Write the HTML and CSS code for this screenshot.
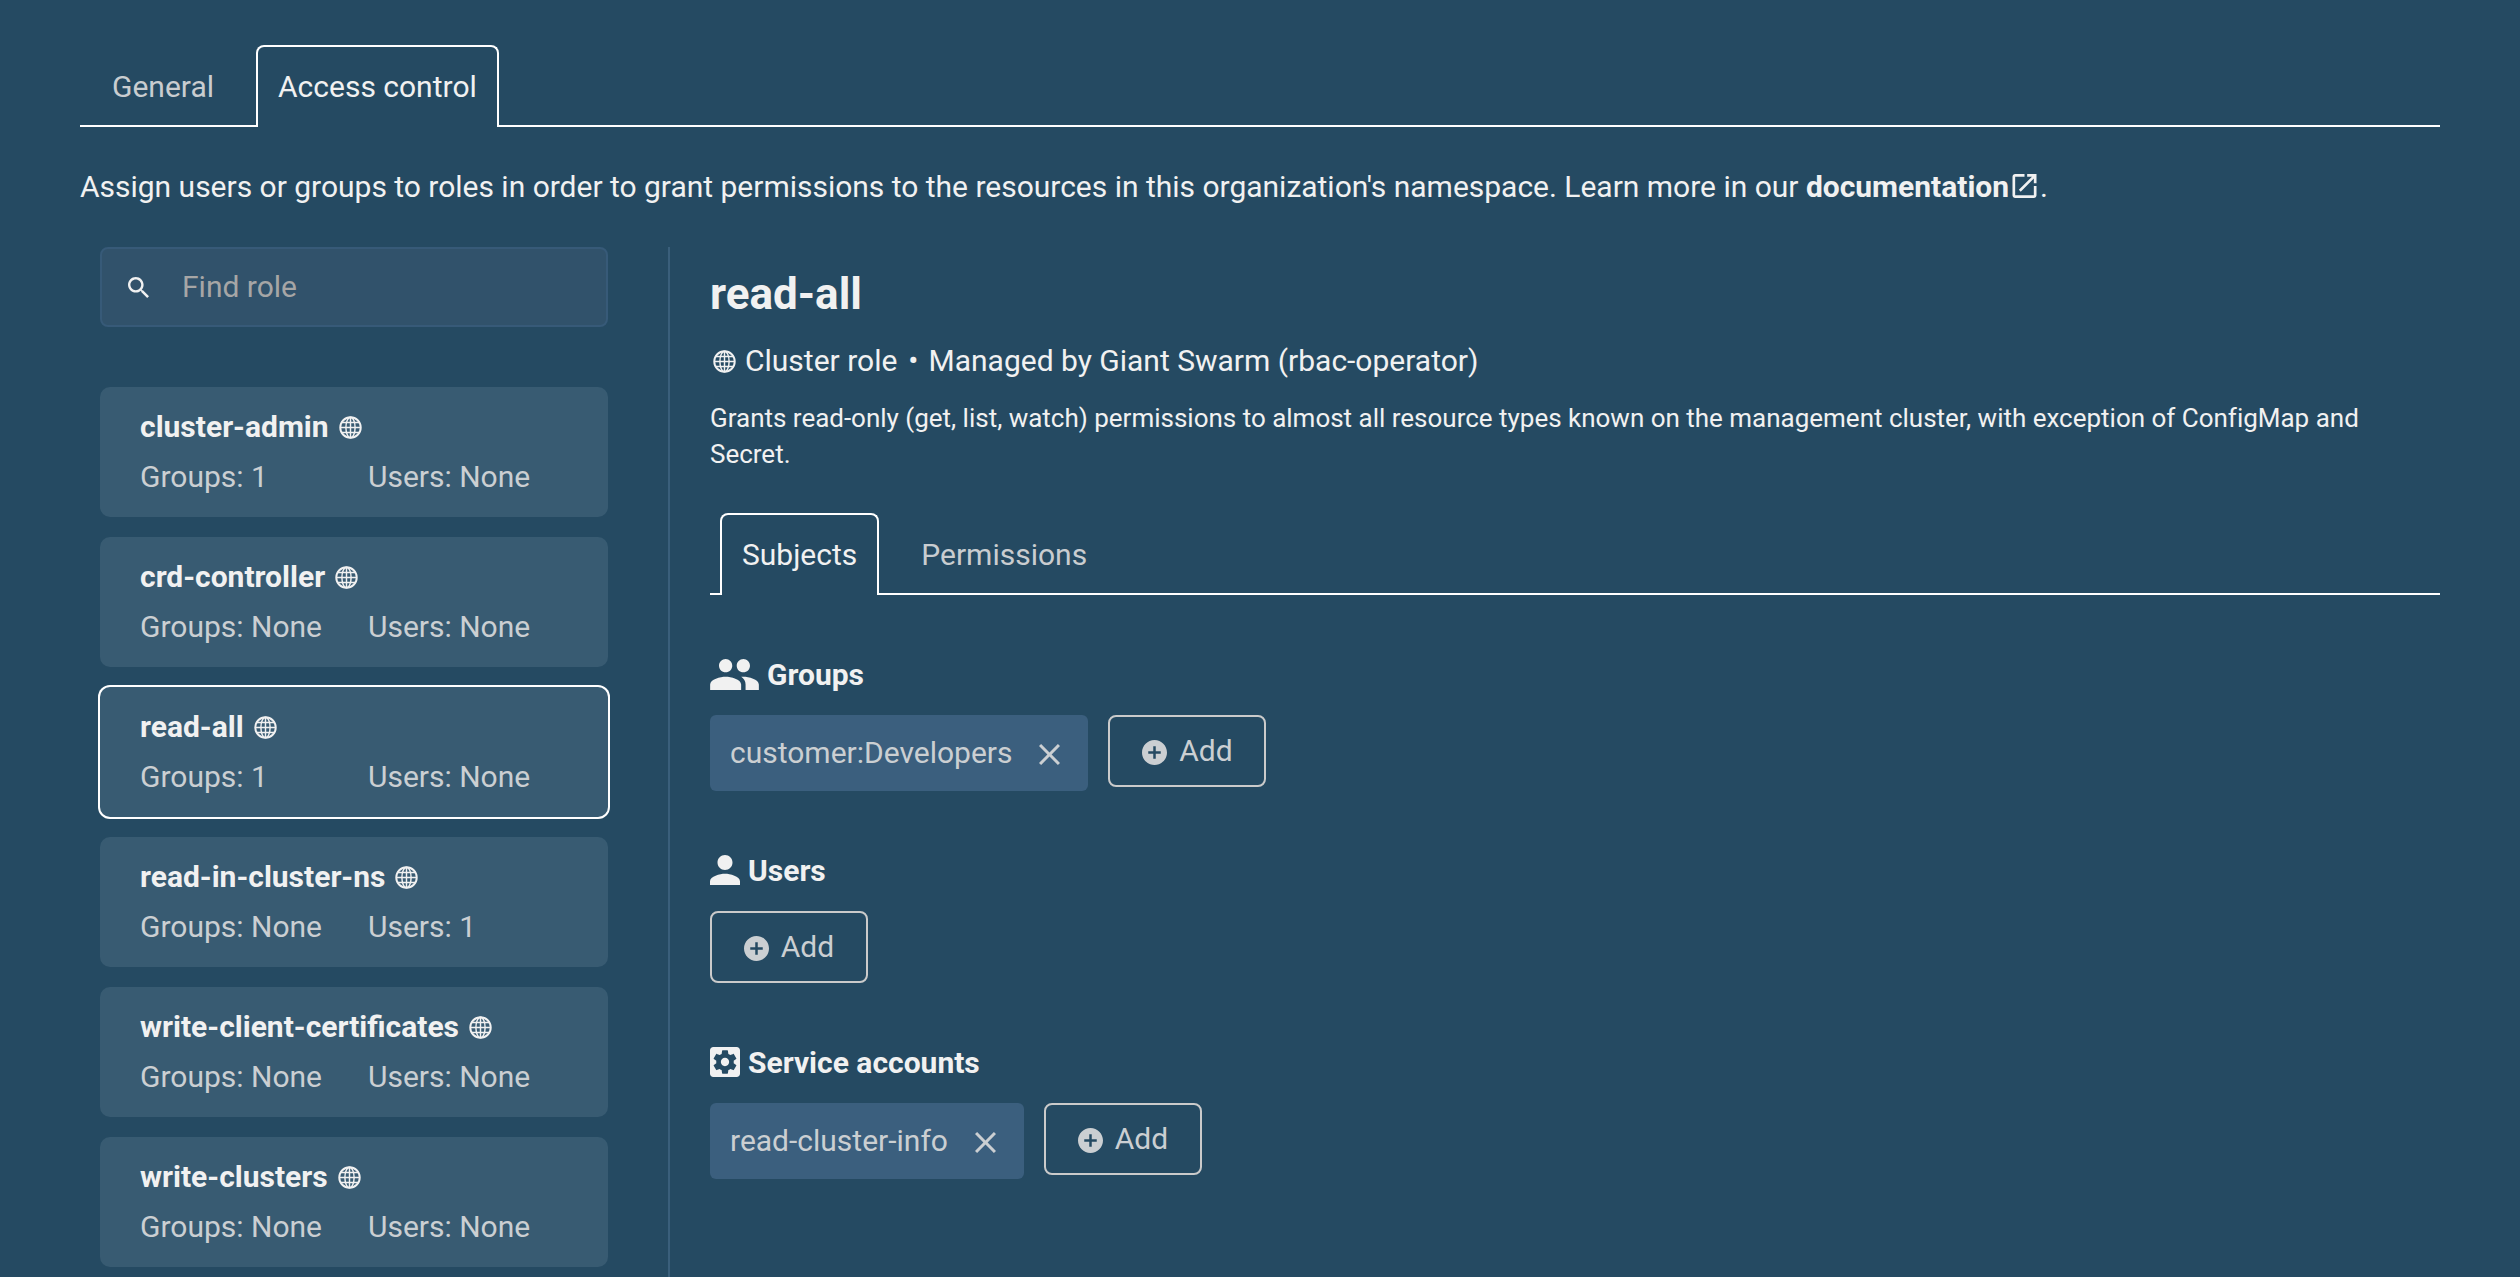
FILE: index.html
```html
<!DOCTYPE html>
<html lang="en">
<head>
<meta charset="utf-8">
<title>Access control</title>
<link rel="stylesheet" href="styles.css">
</head>
<body>
<svg class="defs" aria-hidden="true">
  <symbol id="globe" viewBox="0 0 24 24"><g fill="none" stroke="currentColor"><circle cx="12" cy="12" r="10.7" stroke-width="2"/><g stroke-width="1.5"><ellipse cx="12" cy="12" rx="4.8" ry="10.6"/><path d="M12 1.4v21.2M1.4 12h21.2M3 6.8h18M3 17.2h18"/></g></g></symbol>
  <symbol id="search" viewBox="3 3 17.5 17.5"><path fill="currentColor" d="M15.5 14h-.79l-.28-.27C15.41 12.59 16 11.11 16 9.5 16 5.91 13.09 3 9.5 3S3 5.91 3 9.5 5.91 16 9.5 16c1.61 0 3.09-.59 4.23-1.57l.27.28v.79l5 4.99L20.49 19l-4.99-5zm-6 0C7.01 14 5 11.99 5 9.5S7.01 5 9.5 5 14 7.01 14 9.5 11.99 14 9.5 14z"/></symbol>
  <symbol id="external" viewBox="3 3 18 18"><path fill="currentColor" d="M19 19H5V5h7V3H5c-1.11 0-2 .9-2 2v14c0 1.1.89 2 2 2h14c1.1 0 2-.9 2-2v-7h-2v7zM14 3v2h3.59l-9.83 9.83 1.41 1.41L19 6.41V10h2V3h-7z"/></symbol>
  <symbol id="group" viewBox="1 5 22 14"><path fill="currentColor" d="M16 11c1.66 0 2.99-1.34 2.99-3S17.66 5 16 5c-1.66 0-3 1.34-3 3s1.34 3 3 3zm-8 0c1.66 0 2.99-1.34 2.99-3S9.66 5 8 5C6.34 5 5 6.34 5 8s1.34 3 3 3zm0 2c-2.33 0-7 1.17-7 3.5V19h14v-2.5c0-2.33-4.67-3.5-7-3.5zm8 0c-.29 0-.62.02-.97.05 1.16.84 1.97 1.97 1.97 3.45V19h6v-2.5c0-2.33-4.67-3.5-7-3.5z"/></symbol>
  <symbol id="person" viewBox="4 4 16 16"><path fill="currentColor" d="M12 12c2.21 0 4-1.79 4-4s-1.79-4-4-4-4 1.79-4 4 1.79 4 4 4zm0 2c-2.67 0-8 1.34-8 4v2h16v-2c0-2.66-5.33-4-8-4z"/></symbol>
  <symbol id="service" viewBox="3 3 18 18"><path fill="currentColor" fill-rule="evenodd" d="M19 3H5c-1.11 0-2 .9-2 2v14c0 1.1.89 2 2 2h14c1.11 0 2-.9 2-2V5c0-1.1-.89-2-2-2zm-1.75 9c0 .23-.02.46-.05.68l1.48 1.16c.13.11.17.3.08.45l-1.4 2.42c-.09.15-.27.21-.43.15l-1.74-.7c-.36.28-.76.51-1.18.69l-.26 1.85c-.03.17-.18.3-.35.3h-2.8c-.17 0-.32-.13-.35-.29l-.26-1.85c-.43-.18-.82-.41-1.18-.69l-1.74.7c-.16.06-.34 0-.43-.15l-1.4-2.42c-.09-.15-.05-.34.08-.45l1.48-1.16c-.03-.23-.05-.46-.05-.69 0-.23.02-.46.05-.68l-1.48-1.16c-.13-.11-.17-.3-.08-.45l1.4-2.42c.09-.15.27-.21.43-.15l1.74.7c.36-.28.76-.51 1.18-.69l.26-1.85c.03-.17.18-.3.35-.3h2.8c.17 0 .32.13.35.29l.26 1.85c.43.18.82.41 1.18.69l1.74-.7c.16-.06.34 0 .43.15l1.4 2.42c.09.15.05.34-.08.45l-1.48 1.16c.03.23.05.46.05.69zM12 9.5c-1.38 0-2.5 1.12-2.5 2.5s1.12 2.5 2.5 2.5 2.5-1.12 2.5-2.5-1.12-2.5-2.5-2.5z"/></symbol>
  <symbol id="close" viewBox="5 5 14 14"><path fill="currentColor" d="M19 6.41L17.59 5 12 10.59 6.41 5 5 6.41 10.59 12 5 17.59 6.41 19 12 13.41 17.59 19 19 17.59 13.41 12z"/></symbol>
  <symbol id="add" viewBox="2 2 20 20"><path fill="currentColor" fill-rule="evenodd" d="M12 2C6.48 2 2 6.48 2 12s4.48 10 10 10 10-4.48 10-10S17.52 2 12 2zm5 11h-4v4h-2v-4H7v-2h4V7h2v4h4v2z"/></symbol>
</svg>

<main class="page">
  <nav class="tabs">
    <a class="tab tab-first">General</a>
    <a class="tab tab-active">Access control</a>
  </nav>

  <p class="intro">Assign users or groups to roles in order to grant permissions to the resources in this organization's namespace. Learn more in our <strong>documentation</strong><svg class="icon-external"><use href="#external"/></svg>.</p>

  <div class="columns">
    <aside class="sidebar">
      <div class="search">
        <svg class="icon-search"><use href="#search"/></svg>
        <span class="placeholder">Find role</span>
      </div>
      <ul class="roles">
        <li class="role">
          <div class="role-name">cluster-admin <svg class="icon-globe"><use href="#globe"/></svg></div>
          <div class="role-counts"><span>Groups: 1</span><span>Users: None</span></div>
        </li>
        <li class="role">
          <div class="role-name">crd-controller <svg class="icon-globe"><use href="#globe"/></svg></div>
          <div class="role-counts"><span>Groups: None</span><span>Users: None</span></div>
        </li>
        <li class="role role-selected">
          <div class="role-name">read-all <svg class="icon-globe"><use href="#globe"/></svg></div>
          <div class="role-counts"><span>Groups: 1</span><span>Users: None</span></div>
        </li>
        <li class="role">
          <div class="role-name">read-in-cluster-ns <svg class="icon-globe"><use href="#globe"/></svg></div>
          <div class="role-counts"><span>Groups: None</span><span>Users: 1</span></div>
        </li>
        <li class="role">
          <div class="role-name">write-client-certificates <svg class="icon-globe"><use href="#globe"/></svg></div>
          <div class="role-counts"><span>Groups: None</span><span>Users: None</span></div>
        </li>
        <li class="role">
          <div class="role-name">write-clusters <svg class="icon-globe"><use href="#globe"/></svg></div>
          <div class="role-counts"><span>Groups: None</span><span>Users: None</span></div>
        </li>
      </ul>
    </aside>

    <section class="detail">
      <h1 class="detail-title">read-all</h1>
      <div class="detail-meta"><svg class="icon-globe"><use href="#globe"/></svg><span>Cluster role</span><span class="dot">•</span><span>Managed by Giant Swarm (rbac-operator)</span></div>
      <p class="detail-desc">Grants read-only (get, list, watch) permissions to almost all resource types known on the management cluster, with exception of ConfigMap and Secret.</p>

      <nav class="tabs subtabs">
        <a class="tab tab-first tab-active">Subjects</a>
        <a class="tab">Permissions</a>
      </nav>

      <div class="subject">
        <h2 class="subject-title"><svg class="icon-group"><use href="#group"/></svg>Groups</h2>
        <div class="subject-row">
          <span class="chip">customer:Developers<svg class="icon-close"><use href="#close"/></svg></span>
          <button class="add"><svg class="icon-add"><use href="#add"/></svg>Add</button>
        </div>
      </div>

      <div class="subject">
        <h2 class="subject-title"><svg class="icon-person"><use href="#person"/></svg>Users</h2>
        <div class="subject-row">
          <button class="add"><svg class="icon-add"><use href="#add"/></svg>Add</button>
        </div>
      </div>

      <div class="subject">
        <h2 class="subject-title"><svg class="icon-person"><use href="#service"/></svg>Service accounts</h2>
        <div class="subject-row">
          <span class="chip">read-cluster-info<svg class="icon-close"><use href="#close"/></svg></span>
          <button class="add"><svg class="icon-add"><use href="#add"/></svg>Add</button>
        </div>
      </div>
    </section>
  </div>
</main>
</body>
</html>
```

FILE: styles.css
```css
* { box-sizing: border-box; }
html, body { margin: 0; height: 100%; overflow: hidden; }
body {
  background: #254a62;
  color: #f1f1f1;
  font-family: Roboto, "Liberation Sans", sans-serif;
  font-size: 30px;
}
.defs { display: none; }
.page { padding: 45px 80px 0; height: 1277px; overflow: hidden; }

/* Tabs */
.tabs { display: flex; gap: 20px; height: 82px; border-bottom: 2px solid #fff; }
.tab {
  display: flex; align-items: center; height: 82px;
  padding: 0 20px 1px; border: 2px solid transparent; border-bottom: 0;
  border-radius: 8px 8px 0 0; color: #c9cdd0;
}
.tab-first { margin-left: 10px; }
.tab-active { border-color: #fff; color: #f1f1f1; background: #254a62; }

.intro { margin: 0; padding: 40px 0 0; height: 120px; line-height: 40px; letter-spacing: -0.012px; }
.intro strong { font-weight: 700; }
.icon-external { display: inline-block; width: 25px; height: 24px; margin: 0 3px; vertical-align: -1px; }

/* Columns */
.columns { display: flex; }
.sidebar { width: 590px; padding: 0 60px 0 20px; flex: none; border-right: 2px solid #3a5f7b; min-height: 1100px; }
.detail { flex: 1; padding: 19px 0 0 40px; min-width: 0; }

/* Search */
.search {
  display: flex; align-items: center; height: 80px;
  background: #31526b; border: 2px solid #375a78; border-radius: 8px;
  padding: 0 0 2px 26px; margin-bottom: 60px;
}
.icon-search { width: 21px; height: 21px; color: #f1f1f1; margin: 2px 33px 0 0; }
.placeholder { color: #a6a6a6; }

/* Role list */
.roles { list-style: none; margin: 0; padding: 0; }
.role { height: 130px; margin-bottom: 20px; padding: 15px 0 15px 40px; background: #385b72; border-radius: 10px; line-height: 50px; }
.role-selected { box-shadow: 0 0 0 2px #fff; }
.role-name { display: flex; align-items: center; gap: 10px; font-size: 30px; font-weight: 700; white-space: nowrap; }
.role-counts { display: grid; grid-template-columns: 228px auto; color: #cbcfd2; }
.icon-globe { width: 23px; height: 23px; flex: none; }

/* Detail */
.detail-title { margin: 0; font-size: 44px; font-weight: 700; line-height: 56px; }
.detail-meta { display: flex; align-items: center; height: 40px; margin-top: 18px; }
.detail-meta .icon-globe { margin: 2px 9px 0 3px; }
.dot { margin: 0 10px 0 11px; }
.detail-desc { margin: 20px 0 0; font-size: 26px; line-height: 36px; letter-spacing: -0.01px; }
.subtabs { margin-top: 41px; }

.subject { margin-top: 60px; }
.subject-title { display: flex; align-items: center; gap: 8px; margin: 0; height: 40px; padding-bottom: 2px; font-size: 30px; font-weight: 700; }
.subject-row { display: flex; align-items: flex-start; gap: 20px; margin-top: 20px; }
.icon-group { width: 49px; height: 31px; }
.icon-person { width: 30px; height: 30px; }

.chip {
  display: flex; align-items: center; height: 76px; padding: 0 27px 2px 20px;
  background: #3b5f7e; border-radius: 6px; color: #cbcfd2;
}
.icon-close { width: 21px; height: 21px; margin-left: 27px; margin-top: 4px; margin-right: 1px; }
.add {
  display: flex; align-items: center; justify-content: center; gap: 12px;
  width: 158px; height: 72px; padding: 0 0 2px;
  background: transparent; border: 2px solid #cbcbcb; border-radius: 8px;
  color: #cbcfd2; font: inherit;
}
.icon-add { width: 25px; height: 25px; margin-top: 4px; }
```
